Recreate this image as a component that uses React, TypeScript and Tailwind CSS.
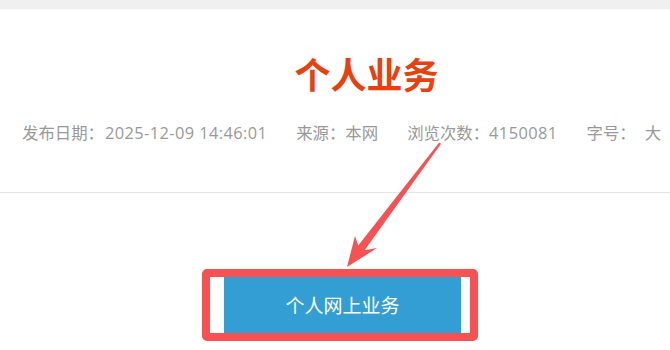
import React from "react";

export default function App() {
  const font = { fontFamily: '"Noto Sans CJK SC", "Noto Sans", sans-serif' };
  const meta = { fontFamily: '"Open Sans", "Noto Sans CJK SC", sans-serif' };
  return (
    <div className="relative w-[670px] h-[350px] bg-white overflow-hidden" style={font}>
      <div className="h-[9px] bg-[#f0f0f0]" />
      <div className="flex justify-center pl-[63px] pt-[46px]">
        <h1 className="text-[36px] leading-[36px] font-bold text-[#e8410e]">个人业务</h1>
      </div>
      <div
        className="flex items-center pl-[22px] pt-[32px] text-[16.4px] leading-[20px] text-[#999999] whitespace-nowrap"
        style={meta}
      >
        <span>
          发布日期：<span className="tracking-[0.4px] ml-[1px]">2025-12-09 14:46:01</span>
        </span>
        <span className="ml-[29px]">来源：本网</span>
        <span className="ml-[29px]">
          浏览次数：<span className="tracking-[0.4px]">4150081</span>
        </span>
        <span className="ml-[29px]">字号：</span>
        <span className="ml-[9px]">大</span>
      </div>
      <div className="mt-[49px] h-px bg-[#e6e6e6]" />
      <div className="flex pl-[202px] pt-[76px]">
        <div className="flex w-[276px] h-[72px] border-[8px] border-[#f75253] rounded-[5px] bg-white">
          <div className="w-[14px]" />
          <div className="w-[237px] bg-[#329ed3] flex items-center justify-center text-white text-[19px] leading-[24px]">
            个人网上业务
          </div>
        </div>
      </div>
      <svg className="absolute left-0 top-0 pointer-events-none" width="670" height="350" viewBox="0 0 670 350">
        <polygon
          points="441,143.8 364.6,250.2 377,248 347,267 355,236 358.2,245.4 439.2,142.4"
          fill="#f75253"
        />
      </svg>
    </div>
  );
}
